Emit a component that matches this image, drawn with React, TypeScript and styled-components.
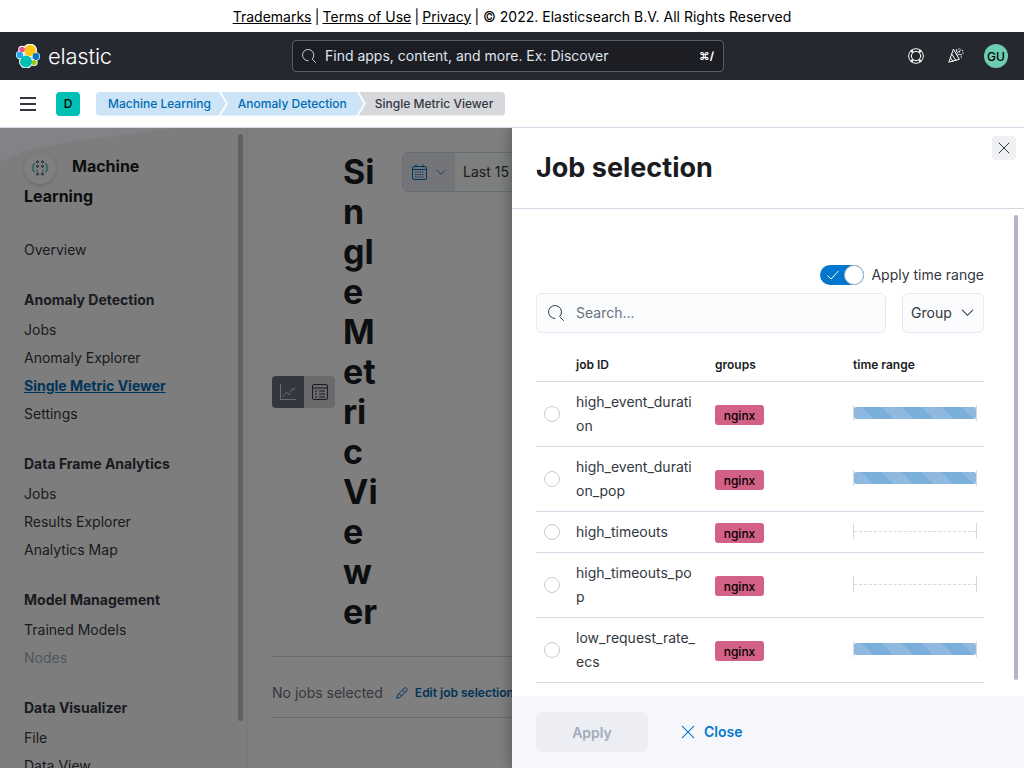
import styled, { createGlobalStyle } from 'styled-components';

const GlobalStyle = createGlobalStyle`
  html, body {
    margin: 0;
    height: 100%;
    overflow: hidden;
    font-family: Inter, "Liberation Sans", sans-serif;
    color: #343741;
  }
  * { box-sizing: border-box; }
`;

const Page = styled.div`
  height: 100vh;
  display: flex;
  flex-direction: column;
`;

const Banner = styled.div`
  height: 32px;
  flex: none;
  display: flex;
  align-items: center;
  justify-content: center;
  gap: 3.2px;
  font-size: 14px;
  color: #000;
  background: #fff;
  a { color: #000; text-decoration: underline; }
`;

const TopBar = styled.header`
  height: 48px;
  flex: none;
  background: #25282f;
  display: flex;
  align-items: center;
  padding: 0 16px;
`;

const Brand = styled.div`
  width: 276px;
  display: flex;
  align-items: center;
  gap: 8px;
`;

const Wordmark = styled.span`
  color: #fff;
  font-size: 22px;
  font-weight: 300;
  letter-spacing: -0.2px;
  line-height: 24px;
`;

const GlobalSearch = styled.div`
  width: 432px;
  height: 32px;
  flex: none;
  display: flex;
  align-items: center;
  padding: 0 9px 1px;
  gap: 9px;
  border: 1px solid #5a5d65;
  border-radius: 4px;
  background: #1d1e24;
  color: #dfe5ef;
  font-size: 14px;
`;

const GlobalSearchText = styled.span`
  flex: 1;
`;

const Shortcut = styled.span`
  font-size: 11px;
  font-weight: 700;
  color: #fff;
`;

const HeaderIcons = styled.div`
  margin-left: auto;
  display: flex;
  align-items: center;
  gap: 24px;
  color: #fff;
`;

const Avatar = styled.div`
  width: 24px;
  height: 24px;
  margin-left: -4px;
  border-radius: 50%;
  background: #6dccb1;
  color: #000;
  font-size: 12px;
  font-weight: 500;
  display: flex;
  align-items: center;
  justify-content: center;
`;

const CrumbBar = styled.nav`
  height: 48px;
  flex: none;
  display: flex;
  align-items: center;
  padding-left: 20px;
  background: #fff;
  border-bottom: 1px solid #d3dae6;
`;

const Burger = styled.div`
  width: 16px;
  height: 14px;
  margin-right: 20px;
  display: flex;
  flex-direction: column;
  justify-content: space-between;
  span { display: block; height: 2px; background: #343741; }
`;

const SpaceBadge = styled.div`
  width: 24px;
  height: 24px;
  margin-right: 16px;
  border-radius: 4px;
  background: #00bfb3;
  color: #000;
  font-size: 12px;
  font-weight: 500;
  display: flex;
  align-items: center;
  justify-content: center;
`;

const Crumb = styled.div<{ $last?: boolean; $first?: boolean }>`
  height: 24px;
  display: flex;
  align-items: center;
  font-size: 12px;
  font-weight: 500;
  color: ${p => (p.$last ? '#343741' : '#006bb4')};
  background: ${p => (p.$last ? '#d6d8dc' : '#cce4f5')};
  border-radius: ${p => (p.$first ? '4px 0 0 4px' : p.$last ? '0 4px 4px 0' : '0')};
  padding: ${p => (p.$first ? '0 15px 0 12px' : p.$last ? '0 12px 0 16px' : '0 17px 0 17px')};
  margin-left: ${p => (p.$first ? '0' : '-5px')};
  clip-path: ${p =>
    p.$first
      ? 'polygon(0 0, calc(100% - 7px) 0, 100% 50%, calc(100% - 7px) 100%, 0 100%)'
      : p.$last
      ? 'polygon(0 0, 100% 0, 100% 100%, 0 100%, 7px 50%)'
      : 'polygon(0 0, calc(100% - 7px) 0, 100% 50%, calc(100% - 7px) 100%, 0 100%, 7px 50%)'};
`;

const Workspace = styled.div`
  flex: 1;
  min-height: 0;
  display: flex;
  position: relative;
  overflow: hidden;
`;

const Sidebar = styled.aside`
  width: 248px;
  flex: none;
  position: relative;
  padding: 23px 0 0 24px;
  background: #fbfbfb;
  border-right: 1px solid #f0f0f0;
  overflow: hidden;
`;

const SideScroll = styled.div`
  position: absolute;
  top: 6px;
  left: 238px;
  width: 5px;
  height: 587px;
  border-radius: 3px;
  background: #bdc0c9;
`;

const SideTitle = styled.div`
  font-size: 16px;
  font-weight: 700;
  line-height: 30px;
  color: #1a1c21;
  width: 170px;
  margin-bottom: 25px;
`;

const SideIcon = styled.span`
  display: inline-flex;
  width: 32px;
  height: 32px;
  border-radius: 50%;
  background: #fff;
  box-shadow: 0 1px 4px rgba(0, 0, 0, 0.18);
  align-items: center;
  justify-content: center;
  vertical-align: middle;
  margin: -4px 16px -4px 0;
`;

const NavGroup = styled.div`
  margin-bottom: 22px;
`;

const NavHeading = styled.div`
  font-size: 14px;
  font-weight: 700;
  line-height: 28px;
  margin-bottom: 2px;
  color: #343741;
`;

const NavItem = styled.div<{ $active?: boolean; $disabled?: boolean }>`
  font-size: 14px;
  line-height: 28px;
  font-weight: ${p => (p.$active ? 700 : 400)};
  color: ${p => (p.$active ? '#006bb4' : p.$disabled ? '#a2abba' : '#343741')};
  text-decoration: ${p => (p.$active ? 'underline' : 'none')};
`;

const Main = styled.main`
  flex: 1;
  min-width: 0;
  padding: 24px 0 0 24px;
  background: #fff;
  overflow: hidden;
`;

const TitleRow = styled.div`
  display: flex;
  align-items: flex-start;
`;

const ViewToggle = styled.div`
  align-self: center;
  width: 63px;
  height: 32px;
  flex: none;
  margin-right: 8px;
  display: flex;
  border-radius: 4px;
  overflow: hidden;
  background: #d3d5d9;
`;

const ViewButton = styled.div<{ $on?: boolean }>`
  flex: ${p => (p.$on ? '0 0 32px' : '1')};
  display: flex;
  align-items: center;
  justify-content: center;
  background: ${p => (p.$on ? '#69707d' : 'transparent')};
  color: ${p => (p.$on ? '#d8d9dc' : '#343741')};
`;

const PageTitle = styled.h1`
  width: 38px;
  flex: none;
  margin: 0;
  font-size: 34px;
  line-height: 40px;
  font-weight: 700;
  color: #1a1c21;
  word-break: break-all;
`;

const DatePicker = styled.div`
  width: 300px;
  height: 40px;
  flex: none;
  margin-left: 21px;
  display: flex;
  border: 1px solid #d3dae6;
  border-radius: 6px;
  overflow: hidden;
  font-size: 14px;
  background: #fbfcfd;
`;

const DatePrepend = styled.div`
  width: 52px;
  display: flex;
  align-items: center;
  justify-content: center;
  gap: 7px;
  background: #e6ebf2;
  color: #006bb4;
`;

const DateValue = styled.div`
  padding: 0 0 2px 8px;
  display: flex;
  align-items: center;
  white-space: nowrap;
`;

const JobsBar = styled.div`
  margin-top: 24px;
  width: 500px;
  padding: 24px 0 12px;
  display: flex;
  align-items: center;
  border-top: 1px solid #d3dae6;
  border-bottom: 1px solid #d6d6d6;
  font-size: 14px;
  line-height: 24px;
  color: #69707d;
  white-space: nowrap;
`;

const EditLink = styled.span`
  display: inline-flex;
  align-items: center;
  gap: 7px;
  margin-left: 13px;
  font-size: 12px;
  font-weight: 600;
  color: #006bb4;
`;

const Overlay = styled.div`
  position: absolute;
  top: -1px;
  left: 0;
  right: 0;
  bottom: 0;
  background: rgba(0, 0, 0, 0.5);
  &::before {
    content: '';
    position: absolute;
    top: 1px;
    left: 0;
    width: 248px;
    height: 34px;
    background: rgba(170, 180, 205, 0.13);
    clip-path: polygon(0 100%, 12% 62%, 30% 38%, 50% 20%, 70% 0, 0 0);
  }
`;

const Flyout = styled.section`
  position: absolute;
  top: 0;
  right: 0;
  bottom: 0;
  width: 512px;
  display: flex;
  flex-direction: column;
  background: #fff;
  box-shadow: -4px 0 10px rgba(0, 0, 0, 0.22);
`;

const FlyoutHeader = styled.div`
  height: 81px;
  flex: none;
  padding: 24px;
  border-bottom: 1px solid #d3dae6;
`;

const FlyoutTitle = styled.h2`
  margin: 0;
  font-size: 27px;
  line-height: 32px;
  font-weight: 700;
  color: #1a1c21;
`;

const CloseButton = styled.div`
  position: absolute;
  top: 8px;
  right: 8px;
  width: 24px;
  height: 24px;
  border-radius: 4px;
  background: #eef0f3;
  color: #343741;
  display: flex;
  align-items: center;
  justify-content: center;
`;

const FlyoutBody = styled.div`
  flex: 1;
  min-height: 0;
  position: relative;
  padding: 56px 40px 0 24px;
  overflow: hidden;
`;

const BodyScroll = styled.div`
  position: absolute;
  top: 6px;
  right: 6px;
  width: 4px;
  height: 465px;
  border-radius: 2px;
  background: #b3b5bf;
`;

const SwitchRow = styled.div`
  height: 20px;
  display: flex;
  justify-content: flex-end;
  align-items: center;
  gap: 7px;
  font-size: 14px;
`;

const SwitchLabel = styled.span`
  padding-bottom: 1px;
`;

const Switch = styled.div`
  width: 44px;
  height: 20px;
  position: relative;
  border-radius: 10px;
  background: #0077cc;
  color: #fff;
  display: flex;
  align-items: center;
  padding-left: 6px;
`;

const SwitchKnob = styled.span`
  position: absolute;
  top: 0;
  right: 0;
  width: 20px;
  height: 20px;
  border-radius: 50%;
  background: #fff;
  border: 1px solid #a9b8cc;
`;

const FilterRow = styled.div`
  margin-top: 8px;
  display: flex;
  gap: 16px;
`;

const SearchField = styled.label`
  flex: 1;
  height: 40px;
  display: flex;
  align-items: center;
  gap: 12px;
  padding: 0 11px;
  background: #fbfcfd;
  border: 1px solid #e6e9f2;
  border-radius: 6px;
  color: #343741;
`;

const SearchInput = styled.input`
  flex: 1;
  min-width: 0;
  border: 0;
  outline: 0;
  padding: 0 0 2px;
  background: transparent;
  font: 400 14px Inter, sans-serif;
  &::placeholder { color: #69707d; opacity: 1; }
`;

const GroupSelect = styled.div`
  width: 82px;
  height: 40px;
  display: flex;
  align-items: center;
  justify-content: space-between;
  padding: 0 8px 1px;
  background: #fbfcfd;
  border: 1px solid #e6e9f2;
  border-radius: 6px;
  font-size: 14px;
`;

const JobTable = styled.div`
  margin-top: 16px;
`;

const Row = styled.div`
  display: grid;
  grid-template-columns: 40px 139px 138px 131px;
  align-items: center;
  border-bottom: 1px solid #d3dae6;
`;

const HeadRow = styled(Row)`
  height: 33px;
  padding-bottom: 2px;
  font-size: 12px;
  font-weight: 600;
  color: #1a1c21;
`;

const JobCell = styled.div`
  padding: 8px 16px 8px 0;
  font-size: 14px;
  line-height: 24px;
  word-break: break-all;
`;

const Radio = styled.span`
  display: block;
  width: 16px;
  height: 16px;
  margin-left: 8px;
  border-radius: 50%;
  border: 1px solid #c9cbcd;
  background: #fff;
`;

const Badge = styled.span`
  justify-self: start;
  margin-top: 2px;
  width: 49px;
  height: 20px;
  border-radius: 3px;
  background: #d36086;
  color: #000;
  font-size: 12px;
  font-weight: 500;
  display: flex;
  align-items: center;
  justify-content: center;
`;

const TimeRange = styled.div`
  width: 124px;
  height: 16px;
  margin-bottom: 2px;
  display: flex;
  align-items: center;
  border-left: 1px solid #d3dae6;
  border-right: 1px solid #d3dae6;
`;

const TimeBar = styled.div`
  flex: 1;
  height: 12px;
  border-radius: 2px;
  background: repeating-linear-gradient(45deg, #8fb9df 0 14.14px, #7aaedb 14.14px 28.28px);
`;

const TimeEmpty = styled.div`
  flex: 1;
  border-top: 1px dashed #d3dae6;
`;

const Footer = styled.footer`
  height: 72px;
  flex: none;
  display: flex;
  align-items: center;
  padding: 0 24px;
  background: #f5f7fa;
`;

const ApplyButton = styled.div`
  width: 112px;
  height: 40px;
  display: flex;
  align-items: center;
  justify-content: center;
  border-radius: 6px;
  background: #eceef3;
  color: #a2abba;
  font-size: 14px;
  font-weight: 600;
`;

const FooterClose = styled.div`
  margin-left: 31px;
  padding-bottom: 1px;
  display: flex;
  align-items: center;
  gap: 7px;
  color: #0077cc;
  font-size: 14px;
  font-weight: 600;
`;

const SearchIcon = ({ size = 16 }: { size?: number }) => (
  <svg width={size} height={size} viewBox="0 0 16 16" fill="none" stroke="currentColor" strokeWidth="1" strokeLinecap="round">
    <path d="M7 13.5A6.5 6.5 0 1 1 11.6 11.6L15.5 15.5" />
  </svg>
);

const Chevron = ({ size = 16 }: { size?: number }) => (
  <svg width={size} height={size} viewBox="0 0 16 16" fill="none" stroke="currentColor" strokeWidth="1.1" strokeLinecap="round">
    <path d="M2.5 5.5 8 11l5.5-5.5" />
  </svg>
);

const CrossIcon = ({ size = 16 }: { size?: number }) => (
  <svg width={size} height={size} viewBox="0 0 16 16" fill="none" stroke="currentColor" strokeWidth="1" strokeLinecap="round">
    <path d="M3 3l10 10M13 3 3 13" />
  </svg>
);

const ElasticLogo = () => (
  <svg width="24" height="24" viewBox="0 0 24 24">
    <g fill="#fff">
      <circle cx="14" cy="6.5" r="7" />
      <circle cx="10" cy="17.5" r="7" />
      <circle cx="6" cy="5.5" r="3.8" />
      <circle cx="4" cy="11" r="4.2" />
      <circle cx="20" cy="12.5" r="4.2" />
      <circle cx="18" cy="18.5" r="3.6" />
    </g>
    <circle cx="14" cy="6.5" r="5.8" fill="#fec514" />
    <circle cx="6" cy="5.5" r="2.8" fill="#f04e98" />
    <circle cx="3.8" cy="11" r="3.2" fill="#1ba9f5" />
    <circle cx="20" cy="12.5" r="3.4" fill="#0077cc" />
    <circle cx="18" cy="18.5" r="2.6" fill="#93c90e" />
    <circle cx="10" cy="17.5" r="6" fill="#00bfb3" />
  </svg>
);

const HelpIcon = () => (
  <svg width="16" height="16" viewBox="0 0 16 16" fill="none" stroke="currentColor" strokeWidth="1">
    <circle cx="8" cy="8" r="7.3" />
    <circle cx="8" cy="8" r="4.6" />
    <path d="M3.2 1.9 4.9 4.4M12.8 1.9 11.1 4.4M3.2 14.1 4.9 11.6M12.8 14.1 11.1 11.6" strokeWidth="2" />
  </svg>
);

const PartyIcon = () => (
  <svg width="16" height="16" viewBox="0 0 16 16" fill="none" stroke="currentColor" strokeWidth="1" strokeLinejoin="round" strokeLinecap="round">
    <path d="M5.3 1.5 0.8 14.2 11 11.4Z" />
    <path d="M3.7 6 8 12.6M2.4 9.6 5 13.5" />
    <path d="M7.6 4.6c1.2-.9 1.4-2 1.1-3.2M9.4 7.2c1.4-1 2.8-1 4.3-.3M8.8 5.6l4.2-4" />
    <path d="M11.5 3.8h.01M14.6 2.6h.01M15 5h.01M13.2 9h.01M11 .8h.01" strokeWidth="1.3" />
  </svg>
);

const MlIcon = () => (
  <svg width="16" height="16" viewBox="0 0 16 16" fill="none" strokeWidth="1">
    <g stroke="#343741">
      <circle cx="5.5" cy="1.8" r="1" />
      <circle cx="10.5" cy="1.8" r="1" />
      <circle cx="5.5" cy="6.3" r="1" />
      <circle cx="10.5" cy="6.3" r="1" />
      <circle cx="5.5" cy="14" r="1" />
      <circle cx="10.5" cy="14" r="1" />
    </g>
    <path d="M3 3.5 1 4.5v6.5l2 1.2M13 3.5l2 1v6.5l-2 1.2M4 9.8l2 1.6M12 9.8l-2 1.6" stroke="#00a69b" />
  </svg>
);

const LineChartIcon = () => (
  <svg width="16" height="16" viewBox="0 0 16 16" fill="none" stroke="currentColor" strokeWidth="1">
    <path d="M.5 0v15.5H16" />
    <path d="M3 12.5 6.5 8l2.5 3 3-6.5 1.5 2L15.5 3" strokeDasharray="2.5 .8" />
  </svg>
);

const TableIcon = () => (
  <svg width="16" height="16" viewBox="0 0 16 16" fill="none" stroke="currentColor" strokeWidth="1">
    <rect x=".5" y=".5" width="15" height="15" rx="1.5" />
    <path d="M.5 4h15M3 7h2M3 10h2M3 13h2M7 7h6M7 10h6M7 13h6" />
  </svg>
);

const CalendarIcon = () => (
  <svg width="16" height="16" viewBox="0 0 16 16" fill="none" stroke="currentColor" strokeWidth="1">
    <rect x=".5" y="2.5" width="14" height="13" rx="1.5" />
    <path d="M4 .5v3M11 .5v3M.5 5.5h14" />
    <path d="M3 8h9M3 10.5h9M3 13h9" strokeDasharray="1.4 .9" />
  </svg>
);

const PencilIcon = () => (
  <svg width="12" height="12" viewBox="0 0 12 12" fill="none" stroke="currentColor" strokeWidth="1" strokeLinejoin="round">
    <path d="M.8 11.2 1.5 8 8.6 .9a1 1 0 0 1 1.4 0l1 1a1 1 0 0 1 0 1.4L4 10.5Z" />
    <path d="M3 6.5 5.5 9M6.5 3l2.5 2.5" />
  </svg>
);

const CheckIcon = () => (
  <svg width="14" height="14" viewBox="0 0 14 14" fill="none" stroke="currentColor" strokeWidth="1">
    <path d="M1.5 7.5 5 11l7.5-8" />
  </svg>
);

interface Job {
  id: string;
  hasData: boolean;
}

const jobs: Job[] = [
  { id: 'high_event_duration', hasData: true },
  { id: 'high_event_duration_pop', hasData: true },
  { id: 'high_timeouts', hasData: false },
  { id: 'high_timeouts_pop', hasData: false },
  { id: 'low_request_rate_ecs', hasData: true },
];

const navGroups = [
  {
    title: 'Anomaly Detection',
    items: ['Jobs', 'Anomaly Explorer', 'Single Metric Viewer', 'Settings'],
  },
  {
    title: 'Data Frame Analytics',
    items: ['Jobs', 'Results Explorer', 'Analytics Map'],
  },
  {
    title: 'Model Management',
    items: ['Trained Models', 'Nodes'],
  },
  {
    title: 'Data Visualizer',
    items: ['File', 'Data View'],
  },
];

function App() {
  return (
    <Page>
      <GlobalStyle />
      <Banner>
        <a>Trademarks</a> | <a>Terms of Use</a> | <a>Privacy</a> | © 2022. Elasticsearch B.V. All Rights Reserved
      </Banner>
      <TopBar>
        <Brand>
          <ElasticLogo />
          <Wordmark>elastic</Wordmark>
        </Brand>
        <GlobalSearch>
          <SearchIcon size={14} />
          <GlobalSearchText>Find apps, content, and more. Ex: Discover</GlobalSearchText>
          <Shortcut>⌘/</Shortcut>
        </GlobalSearch>
        <HeaderIcons>
          <HelpIcon />
          <PartyIcon />
          <Avatar>GU</Avatar>
        </HeaderIcons>
      </TopBar>
      <CrumbBar>
        <Burger><span /><span /><span /></Burger>
        <SpaceBadge>D</SpaceBadge>
        <Crumb $first>Machine Learning</Crumb>
        <Crumb>Anomaly Detection</Crumb>
        <Crumb $last>Single Metric Viewer</Crumb>
      </CrumbBar>
      <Workspace>
        <Sidebar>
          <SideScroll />
          <SideTitle>
            <SideIcon><MlIcon /></SideIcon>
            Machine Learning
          </SideTitle>
          <NavGroup>
            <NavItem>Overview</NavItem>
          </NavGroup>
          {navGroups.map(group => (
            <NavGroup key={group.title}>
              <NavHeading>{group.title}</NavHeading>
              {group.items.map(item => (
                <NavItem key={item} $active={item === 'Single Metric Viewer'} $disabled={item === 'Nodes'}>
                  {item}
                </NavItem>
              ))}
            </NavGroup>
          ))}
        </Sidebar>
        <Main>
          <TitleRow>
            <ViewToggle>
              <ViewButton $on><LineChartIcon /></ViewButton>
              <ViewButton><TableIcon /></ViewButton>
            </ViewToggle>
            <PageTitle>Single Metric Viewer</PageTitle>
            <DatePicker>
              <DatePrepend>
                <CalendarIcon />
                <Chevron size={12} />
              </DatePrepend>
              <DateValue>Last 15 minutes</DateValue>
            </DatePicker>
          </TitleRow>
          <JobsBar>
            No jobs selected
            <EditLink><PencilIcon />Edit job selection</EditLink>
          </JobsBar>
        </Main>
        <Overlay />
        <Flyout>
          <FlyoutHeader>
            <FlyoutTitle>Job selection</FlyoutTitle>
          </FlyoutHeader>
          <CloseButton><CrossIcon size={16} /></CloseButton>
          <FlyoutBody>
            <BodyScroll />
            <SwitchRow>
              <Switch>
                <CheckIcon />
                <SwitchKnob />
              </Switch>
              <SwitchLabel>Apply time range</SwitchLabel>
            </SwitchRow>
            <FilterRow>
              <SearchField>
                <SearchIcon />
                <SearchInput placeholder="Search..." />
              </SearchField>
              <GroupSelect>
                Group
                <Chevron size={15} />
              </GroupSelect>
            </FilterRow>
            <JobTable>
              <HeadRow>
                <span />
                <span>job ID</span>
                <span>groups</span>
                <span>time range</span>
              </HeadRow>
              {jobs.map(job => (
                <Row key={job.id}>
                  <Radio />
                  <JobCell>{job.id}</JobCell>
                  <Badge>nginx</Badge>
                  <TimeRange>{job.hasData ? <TimeBar /> : <TimeEmpty />}</TimeRange>
                </Row>
              ))}
            </JobTable>
          </FlyoutBody>
          <Footer>
            <ApplyButton>Apply</ApplyButton>
            <FooterClose><CrossIcon size={18} />Close</FooterClose>
          </Footer>
        </Flyout>
      </Workspace>
    </Page>
  );
}

export default App;
